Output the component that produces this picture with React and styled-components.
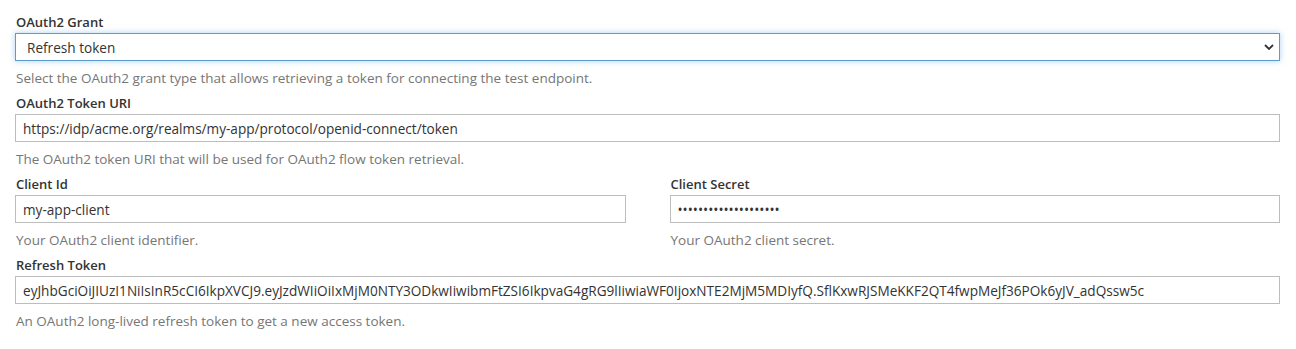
import styled, { createGlobalStyle } from "styled-components";

const GlobalStyle = createGlobalStyle`
body {
    margin: 0;
    background: #fff;
    font-family: "Open Sans", "Liberation Sans", sans-serif;
    color: #333;
}
`;

const App = () => {
    return (
        <>
            <GlobalStyle />
            <Form>
                <Field>
                    <Label>OAuth2 Grant</Label>
                    <SelectWrap>
                        <Select defaultValue="refresh">
                            <option value="refresh">Refresh token</option>
                            <option value="client">Client credentials</option>
                            <option value="password">Password</option>
                        </Select>
                        <Chevron viewBox="0 0 10 6" aria-hidden="true">
                            <path d="M1 1l4 4 4-4" fill="none" stroke="#333" strokeWidth="1.8" />
                        </Chevron>
                    </SelectWrap>
                    <Help>Select the OAuth2 grant type that allows retrieving a token for connecting the test endpoint.</Help>
                </Field>
                <Field>
                    <Label>OAuth2 Token URI</Label>
                    <Input defaultValue="https://idp/acme.org/realms/my-app/protocol/openid-connect/token" />
                    <Help>The OAuth2 token URI that will be used for OAuth2 flow token retrieval.</Help>
                </Field>
                <Columns>
                    <Field>
                        <Label>Client Id</Label>
                        <Input defaultValue="my-app-client" />
                        <Help>Your OAuth2 client identifier.</Help>
                    </Field>
                    <Field>
                        <Label>Client Secret</Label>
                        <Input type="password" defaultValue="abcdefghijklmnopqrst" />
                        <Help>Your OAuth2 client secret.</Help>
                    </Field>
                </Columns>
                <Field>
                    <Label>Refresh Token</Label>
                    <Input defaultValue="eyJhbGciOiJIUzI1NiIsInR5cCI6IkpXVCJ9.eyJzdWIiOiIxMjM0NTY3ODkwIiwibmFtZSI6IkpvaG4gRG9lIiwiaWF0IjoxNTE2MjM5MDIyfQ.SflKxwRJSMeKKF2QT4fwpMeJf36POk6yJV_adQssw5c" />
                    <Help>An OAuth2 long-lived refresh token to get a new access token.</Help>
                </Field>
            </Form>
        </>
    );
};

const Form = styled.form`
display: flex;
flex-direction: column;
gap: 7px;
padding: 13px 16px 0 15px;
`;

const Columns = styled.div`
display: grid;
grid-template-columns: 1fr 1fr;
column-gap: 44px;
`;

const Field = styled.div`
display: flex;
flex-direction: column;
`;

const Label = styled.label`
font-size: 13px;
font-weight: 600;
line-height: 18px;
color: #333;
margin-bottom: 2px;
padding-left: 1px;
`;

const Help = styled.div`
font-size: 13.5px;
line-height: 18px;
color: #767676;
margin-top: 8px;
padding-left: 1px;
`;

const Input = styled.input`
box-sizing: border-box;
height: 28px;
width: 100%;
border: 1px solid #bdbdbd;
border-radius: 0;
padding: 0 7px;
font-family: "Open Sans", "Liberation Sans", sans-serif;
font-size: 13.6px;
color: #333;
background: #fff;
outline: none;
`;

const SelectWrap = styled.div`
position: relative;
`;

const Select = styled.select`
box-sizing: border-box;
appearance: none;
height: 28px;
width: 100%;
border: 1px solid #5a9bd0;
border-radius: 0;
padding: 0 11px;
font-family: "Open Sans", "Liberation Sans", sans-serif;
font-size: 13.6px;
color: #333;
background: #fff;
box-shadow: 0 0 6px rgba(102, 170, 230, 0.55);
outline: none;
`;

const Chevron = styled.svg`
position: absolute;
right: 6px;
top: 11px;
width: 10px;
height: 6px;
pointer-events: none;
`;

export default App;
